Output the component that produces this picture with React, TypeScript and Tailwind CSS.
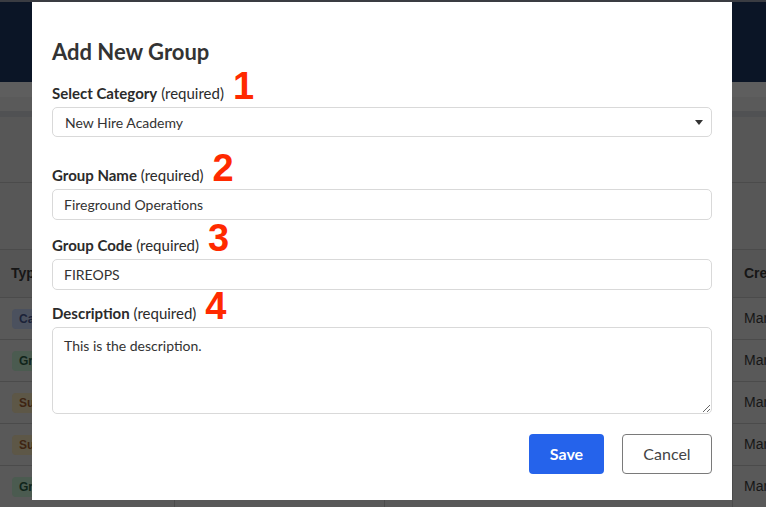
import React from "react";

const rows = [
  { type: "Ca", badge: "bg-[#4b515e] text-[#1b2238]" },
  { type: "Gr", badge: "bg-[#4b5b50] text-[#10241a]" },
  { type: "Su", badge: "bg-[#5d5747] text-[#3e2412]" },
  { type: "Su", badge: "bg-[#5d5747] text-[#3e2412]" },
  { type: "Gr", badge: "bg-[#4b5b50] text-[#10241a]" },
];

function Annotation({ n }: { n: string }) {
  return (
    <span className="ml-[9px] inline-block align-baseline text-[38px] font-bold leading-[0] text-[#ff2a00] [font-family:'Liberation_Sans',Arial,sans-serif]">
      {n}
    </span>
  );
}

function FieldLabel({ title, n }: { title: string; n: string }) {
  return (
    <div className="text-[15px] leading-5 text-[#2b2b2b]">
      <span className="font-bold">{title}</span> <span>(required)</span>
      <Annotation n={n} />
    </div>
  );
}

const inputCls =
  "mt-1 h-[31px] w-full rounded-[5px] border border-[#d9d9d9] bg-white px-[11px] text-[14px] text-[#333] outline-none";

export default function App() {
  return (
    <div className="relative h-[507px] w-[766px] overflow-hidden bg-[#595959] [font-family:'Liberation_Sans',Arial,sans-serif]">
      {/* dimmed page behind the dialog */}
      <div className="h-[2px] bg-[#3a3c42]" />
      <div className="h-[80px] bg-[#0b1526]" />
      <div className="h-[15px] bg-[#5e5e5e]" />
      <div className="h-[14px] bg-[#5a5a5a]" />
      <div className="h-[6px] bg-[#505153]" />
      <div className="h-[66px] border-b border-[#4b4b4b] bg-[#575757]" />
      <div className="h-[67px] border-b border-[#4b4b4b] bg-[#575757]" />
      <div className="grid grid-cols-[175px_210px_348px_1fr] text-[14px] text-[#161616]">
        <div className="flex h-[48px] items-center border-b border-r border-[#4b4b4b] bg-[#555555] px-[11px] font-bold">Type</div>
        <div className="h-[48px] border-b border-r border-[#4b4b4b] bg-[#555555]" />
        <div className="h-[48px] border-b border-r border-[#4b4b4b] bg-[#555555]" />
        <div className="flex h-[48px] items-center border-b border-[#4b4b4b] bg-[#555555] px-[11px] font-bold">Created</div>
        {rows.map((r, i) => (
          <React.Fragment key={i}>
            <div className="flex h-[42px] items-center border-b border-r border-[#4b4b4b] px-[12px]">
              <span className={`rounded-[4px] px-[7px] py-[1px] text-[12px] font-bold ${r.badge}`}>{r.type}oup</span>
            </div>
            <div className="h-[42px] border-b border-r border-[#4b4b4b]" />
            <div className="h-[42px] border-b border-r border-[#4b4b4b]" />
            <div className="flex h-[42px] items-center border-b border-[#4b4b4b] px-[11px]">Mar 12</div>
          </React.Fragment>
        ))}
      </div>

      {/* dialog */}
      <div className="absolute left-[32px] top-[2px] h-[498px] w-[700px] bg-white px-5 pt-[36px] [font-family:Lato,'Noto_Sans',sans-serif]">
        <h2 className="text-[22px] font-bold leading-7 text-[#333]">Add New Group</h2>

        <div className="mt-[17px]">
          <FieldLabel title="Select Category" n="1" />
          <div className="relative mt-1 flex h-[30px] items-center rounded-[5px] border border-[#d9d9d9] bg-white px-3 text-[14px] text-[#333]">
            New Hire Academy
            <svg className="absolute right-[8px] top-[12px]" width="8" height="5" viewBox="0 0 8 5">
              <path d="M0 0h8L4 5z" fill="#333" />
            </svg>
          </div>
        </div>

        <div className="mt-[28px]">
          <FieldLabel title="Group Name" n="2" />
          <input className={inputCls} defaultValue="Fireground Operations" />
        </div>

        <div className="mt-[15px]">
          <FieldLabel title="Group Code" n="3" />
          <input className={inputCls} defaultValue="FIREOPS" />
        </div>

        <div className="mt-[13px]">
          <FieldLabel title="Description" n="4" />
          <textarea
            className="mt-1 block h-[87px] w-full resize-y rounded-[5px] border border-[#d9d9d9] bg-white px-[11px] py-[7px] text-[14px] text-[#333] outline-none"
            defaultValue="This is the description."
          />
        </div>

        <div className="mt-[20px] flex justify-end gap-[18px]">
          <button className="h-[40px] w-[75px] rounded-[4px] bg-[#2563eb] text-[16px] font-bold text-white">Save</button>
          <button className="h-[40px] w-[90px] rounded-[4px] border border-[#7a7a7a] bg-white text-[16px] text-[#444]">Cancel</button>
        </div>
      </div>
    </div>
  );
}
